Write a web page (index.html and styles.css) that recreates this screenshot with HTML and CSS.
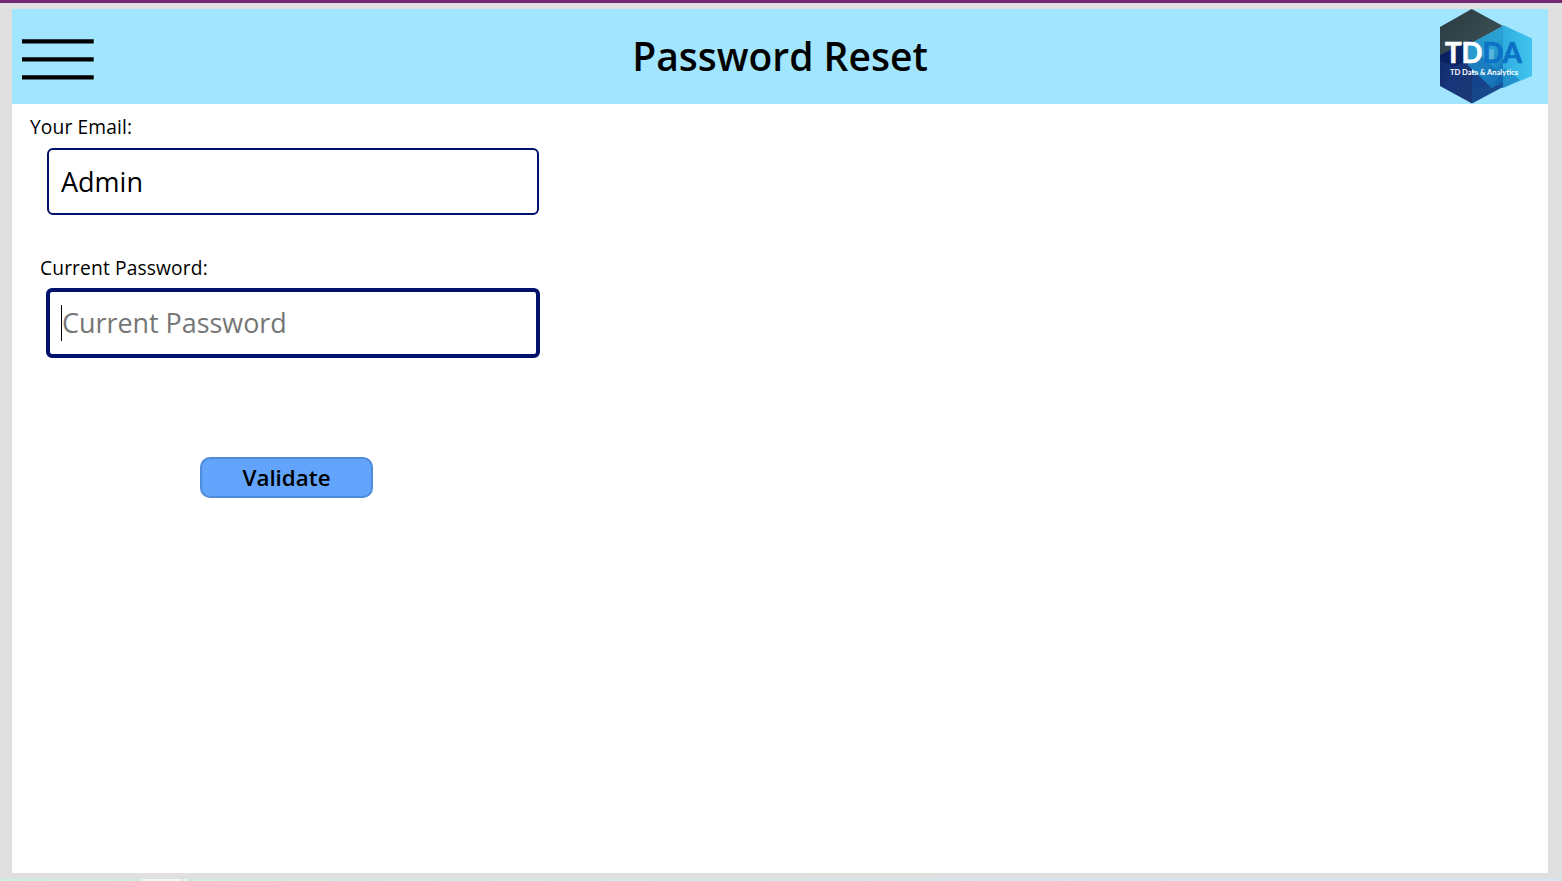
FILE: index.html
```html
<!DOCTYPE html>
<html lang="en">
<head>
<meta charset="utf-8">
<title>Password Reset</title>
<link rel="stylesheet" href="styles.css">
</head>
<body>
<div class="app">
  <main class="screen">
    <header class="header">
      <svg class="menu" width="72" height="41" viewBox="0 0 72 41"><path d="M0 2.4H71.7M0 20.4H71.7M0 38.4H71.7" stroke="#000" stroke-width="4.4"/></svg>
      <h1 class="title">Password Reset</h1>
      <svg class="logo" width="93" height="95" viewBox="0 0 93 95">
        <defs>
          <linearGradient id="dark" x1="0" y1="0" x2="1" y2="1"><stop offset="0" stop-color="#29393f"/><stop offset=".5" stop-color="#35484d"/><stop offset="1" stop-color="#3c545c"/></linearGradient>
          <linearGradient id="navy" x1="0" y1="0" x2="1" y2="1"><stop offset="0" stop-color="#0e2763"/><stop offset=".5" stop-color="#17357a"/><stop offset="1" stop-color="#1c3872"/></linearGradient>
          <linearGradient id="blue" x1="0" y1="0" x2="1" y2="1"><stop offset="0" stop-color="#123f88"/><stop offset="1" stop-color="#1d5090"/></linearGradient>
          <linearGradient id="cyan" x1="0" y1="0" x2="1" y2="0"><stop offset="0" stop-color="#2eade0"/><stop offset="1" stop-color="#42c5ef"/></linearGradient>
          <linearGradient id="core" x1="0" y1="0" x2="1" y2="1"><stop offset="0" stop-color="#2593c6"/><stop offset=".55" stop-color="#2aa0d3"/><stop offset="1" stop-color="#0e68b2"/></linearGradient>
        </defs>
        <path fill="url(#cyan)" d="M63 16 92 29.5V67L63 79Z"/>
        <path fill="url(#dark)" d="M31.7 0 63 17 32 34 0 50V18Z"/>
        <path fill="url(#navy)" d="M0 46 32 31V94.5L0 77Z"/>
        <path fill="#0b2363" d="M0 46 32 31V50L15 57 0 52Z"/>
        <path fill="url(#blue)" d="M32 64H63V78L32 94.5Z"/>
        <path fill="url(#core)" d="M28 36 63 17V72L52 79 28 56Z"/>
        <path fill="#1671b6" opacity=".7" d="M28 56 40 46 63 66V73L52 79Z"/>
        <path fill="#075fa9" d="M54 75 65 59 80 71 63 79Z" opacity=".4"/>
        <path fill="#8acbe9" d="M45 39 54 41V52L48 50Z" opacity=".5"/>
        <text class="logo-main" x="5" y="53.6" textLength="77" lengthAdjust="spacingAndGlyphs"><tspan class="logo-td">TD</tspan><tspan class="logo-da">DA</tspan></text>
        <text class="logo-sub" x="10" y="66" textLength="68" lengthAdjust="spacingAndGlyphs">TD Data &amp; Analytics</text>
      </svg>
    </header>
    <form class="form">
      <label class="label" for="email">Your Email:</label>
      <input class="input" id="email" type="text" value="Admin">
      <label class="label label-password" for="password">Current Password:</label>
      <div class="password-field">
        <input class="input input-active" id="password" type="text" placeholder="Current Password">
        <span class="caret"></span>
      </div>
      <button class="validate" type="button">Validate</button>
    </form>
  </main>
  <footer class="strip"><span class="strip-tab"></span></footer>
</div>
</body>
</html>
```
FILE: styles.css
```css
* { box-sizing: border-box; }
body { margin: 0; overflow: hidden; font-family: "Open Sans", sans-serif; color: #000; }
.app { display: flex; flex-direction: column; height: 881px; border-top: 3px solid #742774; background: #e0e0e0; }
.screen { flex: 1; margin: 6px 14px 6px 12px; background: #fff; }
.header { display: grid; grid-template-columns: 93px 1fr 93px; align-items: center; height: 95px; padding: 0 15px 0 10px; background: #a2e5ff; }
.menu { margin-top: 6px; }
.title { margin: 0; padding: 0 0 1px 5px; font-size: 39px; line-height: 52px; font-weight: 600; text-align: center; }
.logo { display: block; }
.logo-main { font-family: Lato, sans-serif; font-size: 29px; font-weight: 700; stroke-width: .7px; }
.logo-td { fill: #fff; stroke: #fff; }
.logo-da { fill: #0b72c5; stroke: #0b72c5; }
.logo-sub { font-family: Lato, sans-serif; font-size: 7.5px; font-weight: 700; fill: #fff; }
.form { display: flex; flex-direction: column; align-items: flex-start; padding: 10px 0 0 18px; }
.label { font-size: 19.2px; line-height: 26px; letter-spacing: .14px; }
.label-password { margin: 40px 0 0 10px; }
.input { width: 492px; height: 67px; margin: 8px 0 0 17px; padding: 0 12px; border: 2px solid #00126b; border-radius: 6px; background: #fff; color: #000; font: 400 27px "Open Sans", sans-serif; outline: none; }
.password-field { position: relative; margin-top: 7px; }
.input-active { display: block; width: 494px; height: 70px; margin: 0 0 0 16px; padding: 0 12px 1px; border-width: 4px; font-size: 26.9px; }
.input-active::placeholder { color: #767676; opacity: 1; }
.caret { position: absolute; left: 31px; top: 17px; width: 1px; height: 36px; background: #000; }
.validate { width: 173px; height: 41px; margin: 99px 0 0 170px; padding: 0; border: 2px solid #4e8bdb; border-radius: 10px; background: #62a4fb; color: #000; font: 600 22.4px "Open Sans", sans-serif; }
.strip { height: 2px; background: linear-gradient(90deg, #c9f1df, #d5e6f4 75%); }
.strip-tab { display: block; width: 45px; height: 2px; margin-left: 142px; background: linear-gradient(90deg, #eaf9f3 40px, #bcd9cd 40px 41px, #eaf9f3 41px); }
```
